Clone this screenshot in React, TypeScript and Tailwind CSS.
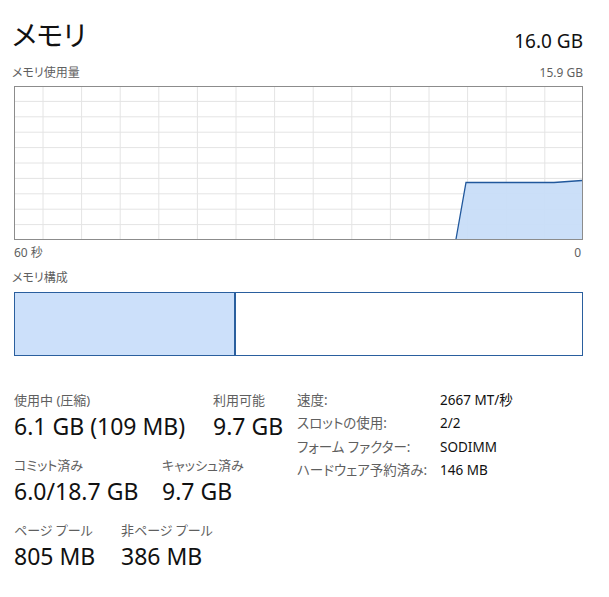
const VLINES = Array.from({ length: 14 }, (_, i) => 28 + i * 38.6)
const HLINES = Array.from({ length: 9 }, (_, i) => 14.4 + i * 15.4)

function UsageGraph() {
  return (
    <div className="h-[154px] w-[569px] border border-[#8c8c8c] bg-white">
      <svg width="567" height="152" viewBox="0 0 567 152" className="block">
        {VLINES.map((x) => (
          <line key={"v" + x} x1={x} y1={0} x2={x} y2={152} stroke="#e4e4e4" strokeWidth={1} />
        ))}
        {HLINES.map((y) => (
          <line key={"h" + y} x1={0} y1={y} x2={567} y2={y} stroke="#e4e4e4" strokeWidth={1} />
        ))}
        <polygon points="441,152 451,95.5 539,95.5 567,93.5 567,152" fill="#c8ddf8" fillOpacity={0.95} />
        <polyline
          points="441,152 451,95.5 539,95.5 567,93.5"
          fill="none"
          stroke="#21589c"
          strokeWidth={1.3}
        />
      </svg>
    </div>
  )
}

function Stat({ label, value, width }: { label: string; value: string; width?: string }) {
  return (
    <div className={width}>
      <div className="text-[13px] leading-[16px] text-[#5f5f5f]">{label}</div>
      <div className="mt-[4px] whitespace-nowrap text-[23px] leading-[28px] text-[#111]">{value}</div>
    </div>
  )
}

const SPECS = [
  ["速度:", "2667 MT/秒"],
  ["スロットの使用:", "2/2"],
  ["フォーム ファクター:", "SODIMM"],
  ["ハードウェア予約済み:", "146 MB"],
]

export default function App() {
  return (
    <div className="h-[597px] w-[609px] bg-white pt-[19px] pl-[14px] font-['Noto_Sans','Noto_Sans_CJK_JP',sans-serif] text-[#111] [font-feature-settings:'palt']">
      <div className="flex w-[569px] items-end justify-between">
        <div className="-ml-[2px] text-[28px] leading-[32px]">メモリ</div>
        <div className="-mb-[2px] text-[19px] leading-[24px]">16.0 GB</div>
      </div>

      <div className="mt-[15px] flex w-[569px] justify-between text-[12px] leading-[14px] text-[#5f5f5f]">
        <span className="-ml-[2px]">メモリ使用量</span>
        <span>15.9 GB</span>
      </div>

      <div className="mt-[6px]">
        <UsageGraph />
      </div>

      <div className="mt-[6px] flex w-[569px] justify-between text-[12px] leading-[14px] text-[#5f5f5f]">
        <span>60 秒</span>
        <span className="pr-[2px]">0</span>
      </div>

      <div className="-ml-[2px] mt-[11px] text-[12px] leading-[14px] text-[#5f5f5f]">メモリ構成</div>

      <div className="mt-[7px] flex h-[64px] w-[569px] border border-[#2a5f9e]">
        <div className="w-[221px] border-r-2 border-[#2a5f9e] bg-[#cce0fa]" />
        <div className="flex-1 bg-white" />
      </div>

      <div className="mt-[32px] flex">
        <div className="flex w-[283px] flex-col gap-[17px] pt-[4px]">
          <div className="flex">
            <Stat label="使用中 (圧縮)" value="6.1 GB (109 MB)" width="w-[199px]" />
            <Stat label="利用可能" value="9.7 GB" />
          </div>
          <div className="flex">
            <Stat label="コミット済み" value="6.0/18.7 GB" width="w-[148px]" />
            <Stat label="キャッシュ済み" value="9.7 GB" />
          </div>
          <div className="flex">
            <Stat label="ページ プール" value="805 MB" width="w-[107px]" />
            <Stat label="非ページ プール" value="386 MB" />
          </div>
        </div>

        <div className="grid grid-cols-[143px_auto] auto-rows-[23.5px] items-center text-[13.5px]">
          {SPECS.map(([k, v]) => (
            <div key={k} className="contents">
              <span className="text-[#5f5f5f]">{k}</span>
              <span className="text-[#111]">{v}</span>
            </div>
          ))}
        </div>
      </div>
    </div>
  )
}
